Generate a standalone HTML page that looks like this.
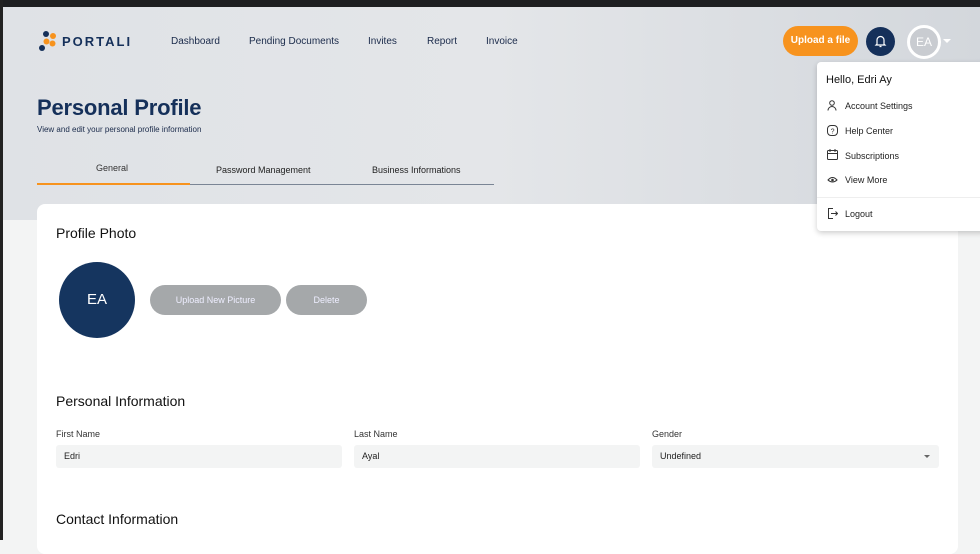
<!DOCTYPE html>
<html><head><meta charset="utf-8"><style>
*{box-sizing:border-box;margin:0;padding:0}
body{width:980px;height:540px;overflow:hidden;background:#f3f4f4;font-family:"Liberation Sans",sans-serif;position:relative;color:#111}
.top{position:absolute;left:0;top:0;width:980px;height:7px;background:#1e1f21}
.lb{position:absolute;left:0;top:0;width:3px;height:540px;background:#222}
.hero{position:absolute;left:3px;top:7px;width:977px;height:213px;background:linear-gradient(90deg,#dfe2e6 0%,#e4e6e9 50%,#d3d7dc 100%)}
.abs{position:absolute}
.nav{font-size:10px;color:#1a2a4a;top:36px}
.card{position:absolute;left:37px;top:204px;width:921px;height:350px;background:#fff;border-radius:8px}
.h2{font-size:14px;color:#111}
.btn{position:absolute;height:30px;border-radius:15px;background:#a5a8aa;color:#eef;font-size:9px;text-align:center;line-height:30px}
.lbl{font-size:9px;color:#333}
.inp{position:absolute;height:23px;background:#f3f4f4;border-radius:3px;font-size:9px;line-height:23px;padding-left:8px;color:#222}
.menu{position:absolute;left:817px;top:62px;width:170px;height:169px;background:#fff;border-radius:4px;box-shadow:0 2px 6px rgba(0,0,0,.2)}
.mi{position:absolute;left:28px;font-size:9px;color:#222}
.ic{position:absolute;left:10px}
</style></head><body>
<div class="top"></div>
<div class="hero"></div>
<div class="lb"></div>
<svg class="abs" style="left:38px;top:30px" width="22" height="22" viewBox="0 0 22 22"><circle cx="8" cy="4" r="3" fill="#15305a"/><circle cx="15" cy="6" r="3" fill="#f7931e"/><circle cx="8.5" cy="11.5" r="3" fill="#f7931e"/><circle cx="14.5" cy="13.5" r="3" fill="#f7931e"/><circle cx="4" cy="18" r="3" fill="#15305a"/></svg>
<div class="abs" style="left:62px;top:34px;font-size:13px;font-weight:bold;letter-spacing:2px;color:#15305a">PORTALI</div>
<div class="abs nav" style="left:171px">Dashboard</div>
<div class="abs nav" style="left:249px">Pending Documents</div>
<div class="abs nav" style="left:368px">Invites</div>
<div class="abs nav" style="left:427px">Report</div>
<div class="abs nav" style="left:486px">Invoice</div>
<div class="abs" style="left:783px;top:26px;width:75px;height:30px;border-radius:15px;background:#f7931e;color:#fff;font-size:10px;font-weight:bold;text-align:center;padding-top:9px;line-height:12px">Upload a file</div>
<div class="abs" style="left:866px;top:27px;width:29px;height:29px;border-radius:50%;background:#15305a"></div>
<svg class="abs" style="left:874px;top:34px" width="13" height="14" viewBox="0 0 13 14"><path d="M3 10V6a3.5 3.5 0 0 1 7 0v4l1 1H2z M5.5 12.5h2" fill="none" stroke="#fff" stroke-width="1.2"/></svg>
<div class="abs" style="left:907px;top:25px;width:34px;height:34px;border-radius:50%;border:3px solid #fff;background:#c9ccd1;color:#fff;font-size:12px;text-align:center;line-height:28px">EA</div>
<div class="abs" style="left:943px;top:39px;border-left:4px solid transparent;border-right:4px solid transparent;border-top:4px solid #fff"></div>
<div class="abs" style="left:37px;top:95px;font-size:22px;font-weight:bold;color:#15305a;letter-spacing:-0.2px">Personal Profile</div>
<div class="abs" style="left:37px;top:125px;font-size:8px;color:#1a2a4a">View and edit your personal profile information</div>
<div class="abs" style="left:96px;top:163px;font-size:9px;color:#333">General</div>
<div class="abs" style="left:216px;top:165px;font-size:9px;color:#222">Password Management</div>
<div class="abs" style="left:372px;top:165px;font-size:9px;color:#222">Business Informations</div>
<div class="abs" style="left:37px;top:184px;width:457px;height:1px;background:#7a8595"></div>
<div class="abs" style="left:37px;top:183px;width:153px;height:2px;background:#f7931e"></div>
<div class="card"></div>
<div class="abs h2" style="left:56px;top:225px">Profile Photo</div>
<div class="abs" style="left:59px;top:262px;width:76px;height:76px;border-radius:50%;background:#15355f;color:#fff;font-size:15px;text-align:center;line-height:76px">EA</div>
<div class="btn" style="left:150px;top:285px;width:131px">Upload New Picture</div>
<div class="btn" style="left:286px;top:285px;width:81px">Delete</div>
<div class="abs h2" style="left:56px;top:393px">Personal Information</div>
<div class="abs lbl" style="left:56px;top:429px">First Name</div>
<div class="abs lbl" style="left:354px;top:429px">Last Name</div>
<div class="abs lbl" style="left:652px;top:429px">Gender</div>
<div class="inp" style="left:56px;top:445px;width:286px">Edri</div>
<div class="inp" style="left:354px;top:445px;width:286px">Ayal</div>
<div class="inp" style="left:652px;top:445px;width:287px">Undefined</div>
<div class="abs" style="left:924px;top:455px;border-left:3px solid transparent;border-right:3px solid transparent;border-top:3px solid #666"></div>
<div class="abs h2" style="left:56px;top:511px">Contact Information</div>
<div class="menu">
<div class="abs" style="left:9px;top:12px;font-size:11px;color:#111">Hello, Edri Ay</div>
<svg class="ic" style="top:38px" width="10" height="11" viewBox="0 0 10 11"><circle cx="5" cy="3" r="2.3" fill="none" stroke="#333"/><path d="M1 10.5a4 4 0 0 1 8 0" fill="none" stroke="#333"/></svg>
<div class="mi" style="top:39px">Account Settings</div>
<svg class="ic" style="top:63px" width="11" height="11" viewBox="0 0 11 11"><rect x=".5" y=".5" width="10" height="10" rx="3.5" fill="none" stroke="#333"/><text x="3.6" y="8.3" font-size="7" fill="#333">?</text></svg>
<div class="mi" style="top:64px">Help Center</div>
<svg class="ic" style="top:87px" width="11" height="11" viewBox="0 0 11 11"><rect x=".5" y="1.5" width="10" height="9" rx="1" fill="none" stroke="#333"/><path d="M.5 4.5h10M3 0v3M8 0v3" stroke="#333"/></svg>
<div class="mi" style="top:89px">Subscriptions</div>
<svg class="ic" style="top:113px" width="11" height="9" viewBox="0 0 11 9"><path d="M1 5q4.5-5 9 0q-4.5 4-9 0z" fill="none" stroke="#333"/><circle cx="5.5" cy="5" r="1.3" fill="#333"/></svg>
<div class="mi" style="top:113px">View More</div>
<div class="abs" style="left:0;top:135px;width:170px;height:1px;background:#eee"></div>
<svg class="ic" style="top:146px" width="11" height="11" viewBox="0 0 11 11"><path d="M6 .5H1.5v10H6M4 5.5h6.5M8.5 3.5l2 2-2 2" fill="none" stroke="#333"/></svg>
<div class="mi" style="top:147px">Logout</div>
</div>
</body></html>
